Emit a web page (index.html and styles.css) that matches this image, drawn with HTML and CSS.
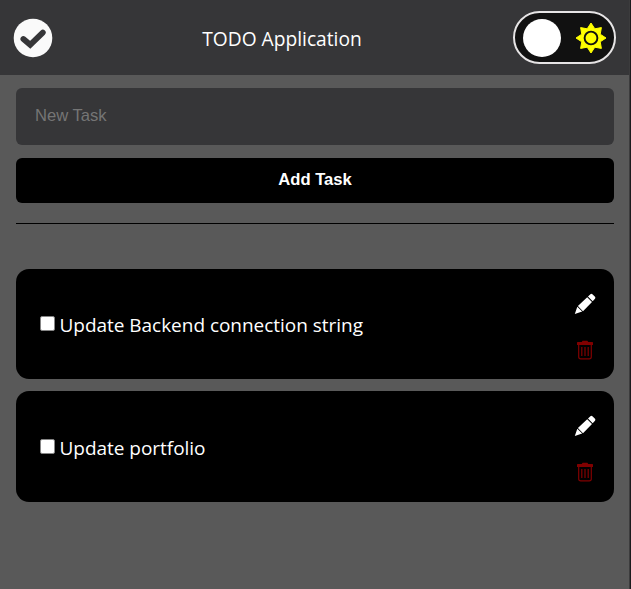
FILE: index.html
```html
<!DOCTYPE html>
<html lang="en">
<head>
<meta charset="utf-8">
<title>TODO Application</title>
<link rel="stylesheet" href="styles.css">
</head>
<body>
<header class="header">
  <svg class="logo" viewBox="0 0 40 40"><circle cx="20" cy="20" r="19.3" fill="#fafafa"/><path d="M10.4 21 17.2 26.8 29.8 14.6" fill="none" stroke="#363638" stroke-width="5.8" stroke-linecap="round"/></svg>
  <h1 class="title">TODO Application</h1>
  <button class="toggle" aria-label="Theme">
    <span class="knob"></span>
    <svg class="sun" viewBox="-16 -16 32 32"><path d="M0-15 3.8-9.2 10.4-10.4 9.2-3.8 15 0 9.2 3.8 10.4 10.4 3.8 9.2 0 15-3.8 9.2-10.4 10.4-9.2 3.8-15 0-9.2-3.8-10.4-10.4-3.8-9.2Z" fill="#ff0" stroke="#ff0" stroke-width="1" stroke-linejoin="round"/><circle r="6.4" fill="#ff0" stroke="#111" stroke-width="1.9"/></svg>
  </button>
</header>
<main class="main">
  <input class="task-input" type="text" placeholder="New Task">
  <button class="add">Add Task</button>
  <hr class="divider">
  <ul class="list">
    <li class="card">
      <label class="task"><input class="check" type="checkbox"><span class="name">Update Backend connection string</span></label>
      <div class="actions">
        <svg class="pencil" viewBox="0 0 22 22"><path d="M.8 21 3.3 13.8 8.2 18.6Z M3.9 13 13.2 4.2 18 9 9 18.2Z M14 3.5 16.4 1.2Q17.4.4 18.4 1.2L21 3.8Q21.8 4.8 21 5.8L18.7 8.2Z" fill="#fff"/></svg>
        <svg class="trash" viewBox="0 0 18 20"><path d="M5.8 2 6.6.8H11.4L12.2 2H16.3Q17 2 17 2.8V5H1V2.8Q1 2 1.7 2Z" fill="#800000"/><path d="M2.7 5V16.7Q2.7 18.8 4.8 18.8H13.2Q15.3 18.8 15.3 16.7V5M5.8 7V16M9 7V16M12.2 7V16" fill="none" stroke="#800000" stroke-width="1.2"/></svg>
      </div>
    </li>
    <li class="card">
      <label class="task"><input class="check" type="checkbox"><span class="name">Update portfolio</span></label>
      <div class="actions">
        <svg class="pencil" viewBox="0 0 22 22"><path d="M.8 21 3.3 13.8 8.2 18.6Z M3.9 13 13.2 4.2 18 9 9 18.2Z M14 3.5 16.4 1.2Q17.4.4 18.4 1.2L21 3.8Q21.8 4.8 21 5.8L18.7 8.2Z" fill="#fff"/></svg>
        <svg class="trash" viewBox="0 0 18 20"><path d="M5.8 2 6.6.8H11.4L12.2 2H16.3Q17 2 17 2.8V5H1V2.8Q1 2 1.7 2Z" fill="#800000"/><path d="M2.7 5V16.7Q2.7 18.8 4.8 18.8H13.2Q15.3 18.8 15.3 16.7V5M5.8 7V16M9 7V16M12.2 7V16" fill="none" stroke="#800000" stroke-width="1.2"/></svg>
      </div>
    </li>
  </ul>
</main>
</body>
</html>
```
FILE: styles.css
```css
* { box-sizing: border-box; }
body {
  margin: 0;
  height: 589px;
  overflow: hidden;
  background: #595959;
  border-right: 1px solid #1c1c1e;
  box-shadow: inset -1px 0 #3c3c3d;
  color: #fff;
  font-family: "Open Sans", "Noto Sans", sans-serif;
}
.header {
  display: flex;
  align-items: center;
  justify-content: space-between;
  height: 75px;
  margin-right: 1px;
  padding: 0 13px;
  background: #363638;
}
.logo { width: 40px; height: 40px; }
.title {
  margin: 1px 2px 0 0;
  font-size: 19.2px;
  font-weight: 400;
  white-space: nowrap;
}
.toggle {
  display: flex;
  align-items: center;
  justify-content: space-between;
  width: 103px;
  height: 53px;
  padding: 0 7px 0 8px;
  border: 2px solid #e6e4e5;
  border-radius: 27px;
  background: #111;
}
.knob { width: 38px; height: 38px; border-radius: 50%; background: #fff; }
.sun { width: 32px; height: 32px; }
.main { padding: 13px 16px 0; }
.task-input {
  display: block;
  width: 100%;
  height: 57px;
  padding: 0 19px 2px;
  border: 0;
  border-radius: 6px;
  background: #363638;
  color: #fff;
  font: 16.6px "Liberation Sans", Arial, sans-serif;
}
.task-input::placeholder { color: #757575; }
.add {
  display: block;
  width: 100%;
  height: 45px;
  margin-top: 13px;
  padding: 0 0 2px;
  border: 0;
  border-radius: 6px;
  background: #000;
  color: #fff;
  font: bold 16.6px "Liberation Sans", Arial, sans-serif;
}
.divider { height: 1px; margin: 20px 0 45px; border: 0; background: #000; }
.list { display: grid; gap: 12px; margin: 0; padding: 0; list-style: none; }
.card {
  display: flex;
  align-items: center;
  justify-content: space-between;
  height: 110.4px;
  padding: 0 18px 0 24px;
  border-radius: 13px;
  background: #000;
}
.task { display: flex; align-items: center; }
.check {
  appearance: none;
  width: 15px;
  height: 15px;
  margin: 0 4.5px 1px 0;
  border: 1px solid #858585;
  border-radius: 2px;
  background: #fff;
}
.name { margin-top: 3px; font-size: 19px; line-height: 27px; letter-spacing: -0.03px; white-space: nowrap; }
.actions { display: flex; flex-direction: column; align-items: center; gap: 25px; padding-top: 4px; }
.pencil { width: 22px; height: 22px; }
.trash { width: 18px; height: 20px; }
```
